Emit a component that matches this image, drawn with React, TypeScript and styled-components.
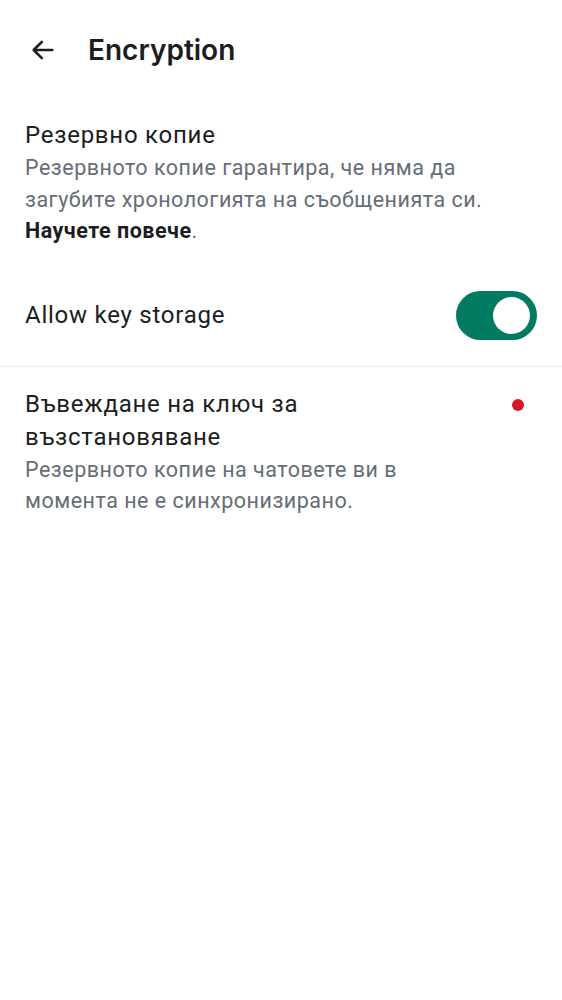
import React from "react";
import styled, { createGlobalStyle } from "styled-components";

const Global = createGlobalStyle`
  html, body { margin: 0; padding: 0; background: #ffffff; }
  body { font-family: Roboto, "Noto Sans", sans-serif; color: #1b1d22; }
`;

const Page = styled.div`
  width: 562px;
  min-height: 1000px;
  background: #ffffff;
  display: flex;
  flex-direction: column;
`;

const TopBar = styled.header`
  height: 100px;
  display: flex;
  align-items: center;
  padding: 0 0 0 29px;
  box-sizing: border-box;
`;

const BackButton = styled.button`
  border: none;
  background: none;
  padding: 0;
  width: 28px;
  height: 28px;
  display: flex;
  align-items: center;
  justify-content: center;
  color: #1b1d22;
  margin-right: 31px;
`;

const Title = styled.h1`
  margin: 0;
  font-family: Inter, Roboto, sans-serif;
  font-weight: 600;
  font-size: 28px;
  color: #1b1d22;
`;

const Section = styled.div<{ $top: number; $bottom: number }>`
  display: flex;
  align-items: flex-start;
  padding: ${(p) => p.$top}px 25px ${(p) => p.$bottom}px 25px;
`;

const TextCol = styled.div`
  flex: 1;
  display: flex;
  flex-direction: column;
`;

const ItemTitle = styled.div`
  font-size: 24px;
  line-height: 33px;
  letter-spacing: 0.75px;
  color: #1b1d22;
`;

const ItemDesc = styled.div`
  font-size: 21.5px;
  line-height: 31.5px;
  letter-spacing: 0.5px;
  color: #656d77;
`;

const Strong = styled.strong`
  color: #1b1d22;
  font-weight: 700;
`;

const ToggleRow = styled.div`
  display: flex;
  align-items: center;
  justify-content: space-between;
  padding: 0 25px;
  height: 101px;
  border-bottom: 1px solid #ebedf1;
`;

const Switch = styled.div<{ $on: boolean }>`
  width: 81px;
  height: 49px;
  border-radius: 25px;
  background: ${(p) => (p.$on ? "#007a61" : "#c1c6cd")};
  display: flex;
  align-items: center;
  justify-content: ${(p) => (p.$on ? "flex-end" : "flex-start")};
  padding: 0 7px;
  box-sizing: border-box;
`;

const Thumb = styled.div`
  width: 37px;
  height: 37px;
  border-radius: 50%;
  background: #ffffff;
`;

const Dot = styled.div`
  width: 12px;
  height: 12px;
  border-radius: 50%;
  background: #d51928;
  margin: 11px 13px 0 30px;
`;

export default function App() {
  return (
    <Page>
      <Global />
      <TopBar>
        <BackButton aria-label="Back">
          <svg width="28" height="28" viewBox="0 0 24 24" fill="none">
            <path d="M20 12H4.5M11 5l-7 7 7 7" stroke="#1b1d22" strokeWidth="2.2" strokeLinecap="round" strokeLinejoin="round" />
          </svg>
        </BackButton>
        <Title>Encryption</Title>
      </TopBar>
      <Section $top={19} $bottom={18}>
        <TextCol>
          <ItemTitle>Резервно копие</ItemTitle>
          <ItemDesc>
            Резервното копие гарантира, че няма да загубите хронологията на съобщенията си. <Strong>Научете повече</Strong>.
          </ItemDesc>
        </TextCol>
      </Section>
      <ToggleRow>
        <ItemTitle>Allow key storage</ItemTitle>
        <Switch $on={true}>
          <Thumb />
        </Switch>
      </ToggleRow>
      <Section $top={21} $bottom={18}>
        <TextCol>
          <ItemTitle>Въвеждане на ключ за възстановяване</ItemTitle>
          <ItemDesc>Резервното копие на чатовете ви в момента не е синхронизирано.</ItemDesc>
        </TextCol>
        <Dot />
      </Section>
    </Page>
  );
}
